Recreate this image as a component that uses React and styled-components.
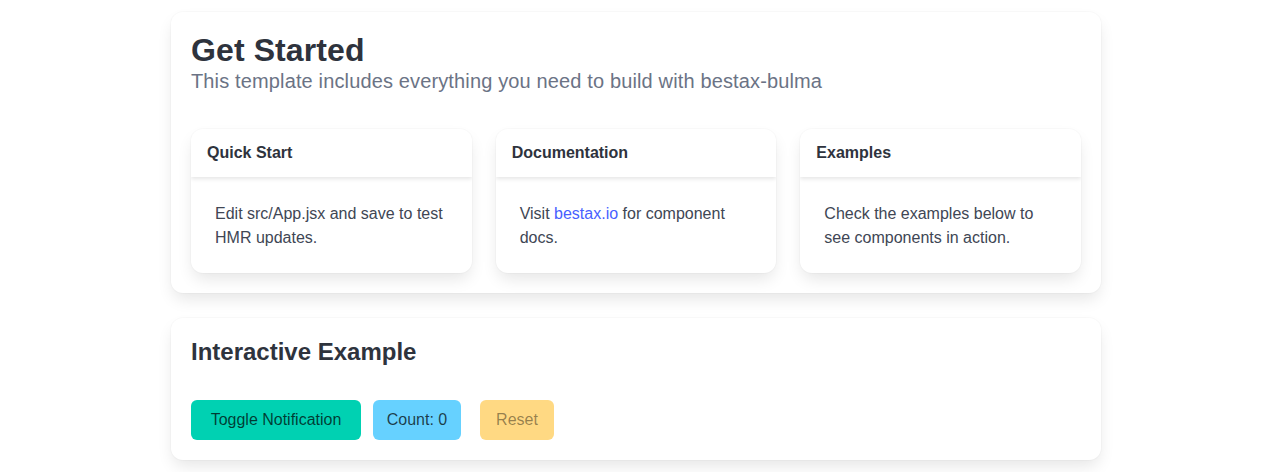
import React, { useState } from 'react';
import styled, { createGlobalStyle } from 'styled-components';

const GlobalStyle = createGlobalStyle`
  html, body {
    margin: 0;
    padding: 0;
    background: #fff;
  }
  body {
    font-family: "Liberation Sans", Arial, Helvetica, sans-serif;
    color: #404654;
    font-size: 16px;
    line-height: 1.5;
    -webkit-font-smoothing: antialiased;
  }
  * {
    box-sizing: border-box;
  }
`;

const Page = styled.div`
  width: 930px;
  margin: 0 auto;
  padding-top: 12px;
`;

const Box = styled.div`
  background: #fff;
  border-radius: 12px;
  box-shadow: 0 8px 16px -2px rgba(10, 10, 10, 0.1),
    0 0 0 1px rgba(10, 10, 10, 0.02);
  padding: 20px;
  margin-bottom: 25px;
`;

const Title = styled.h1`
  margin: 0;
  color: #2e333d;
  font-weight: 700;
  font-size: ${props => (props.small ? '24px' : '32px')};
  line-height: 1.125;
  letter-spacing: ${props => (props.small ? '0' : '0.1px')};
`;

const Subtitle = styled.p`
  margin: 1px 0 0;
  color: #6b7385;
  font-size: 20px;
  line-height: 1.25;
  letter-spacing: 0.14px;
`;

const Columns = styled.div`
  display: grid;
  grid-template-columns: repeat(3, 1fr);
  gap: 24px;
  margin-top: 35px;
`;

const Card = styled.div`
  background: #fff;
  border-radius: 12px;
  box-shadow: 0 8px 16px -2px rgba(10, 10, 10, 0.1),
    0 0 0 1px rgba(10, 10, 10, 0.02);
  overflow: hidden;
`;

const CardHeader = styled.header`
  box-shadow: 0 2px 4px rgba(10, 10, 10, 0.1);
  padding: 12px 16px;
  font-weight: 700;
  color: #2e333d;
  line-height: 24px;
`;

const CardContent = styled.div`
  padding: 24px;
  line-height: 24px;
  color: #404654;
  padding-top: 25px;
  padding-bottom: 23px;
`;

const Link = styled.a`
  color: #485fff;
  text-decoration: none;
`;

const Buttons = styled.div`
  display: flex;
  align-items: center;
  margin-top: 35px;
`;

const Button = styled.button`
  font-family: inherit;
  font-size: 16px;
  height: 40px;
  width: ${props => props.w}px;
  padding: 0;
  text-align: center;
  border: 1px solid transparent;
  border-radius: 6px;
  cursor: pointer;
  background: ${props => props.bg};
  color: ${props => (props.muted ? 'rgba(0, 0, 0, 0.42)' : 'rgba(0, 0, 0, 0.72)')};
  margin-right: ${props => props.gap || 0}px;
`;

export default function App() {
  const [count, setCount] = useState(0);
  const [, setShow] = useState(false);

  return (
    <>
      <GlobalStyle />
      <Page>
        <Box>
          <Title>Get Started</Title>
          <Subtitle>
            This template includes everything you need to build with bestax-bulma
          </Subtitle>
          <Columns>
            <Card>
              <CardHeader>Quick Start</CardHeader>
              <CardContent>Edit src/App.jsx and save to test HMR updates.</CardContent>
            </Card>
            <Card>
              <CardHeader>Documentation</CardHeader>
              <CardContent>
                Visit <Link href="#">bestax.io</Link> for component docs.
              </CardContent>
            </Card>
            <Card>
              <CardHeader>Examples</CardHeader>
              <CardContent>
                Check the examples below to see components in action.
              </CardContent>
            </Card>
          </Columns>
        </Box>
        <Box>
          <Title as="h2" small>Interactive Example</Title>
          <Buttons>
            <Button bg="#00d1b2" w={170} gap={12} onClick={() => setShow(s => !s)}>
              Toggle Notification
            </Button>
            <Button bg="#66d1ff" w={88} gap={19} onClick={() => setCount(c => c + 1)}>
              Count: {count}
            </Button>
            <Button
              bg="#ffd983"
              w={74}
              muted
              disabled={count === 0}
              onClick={() => setCount(0)}
            >
              Reset
            </Button>
          </Buttons>
        </Box>
      </Page>
    </>
  );
}
